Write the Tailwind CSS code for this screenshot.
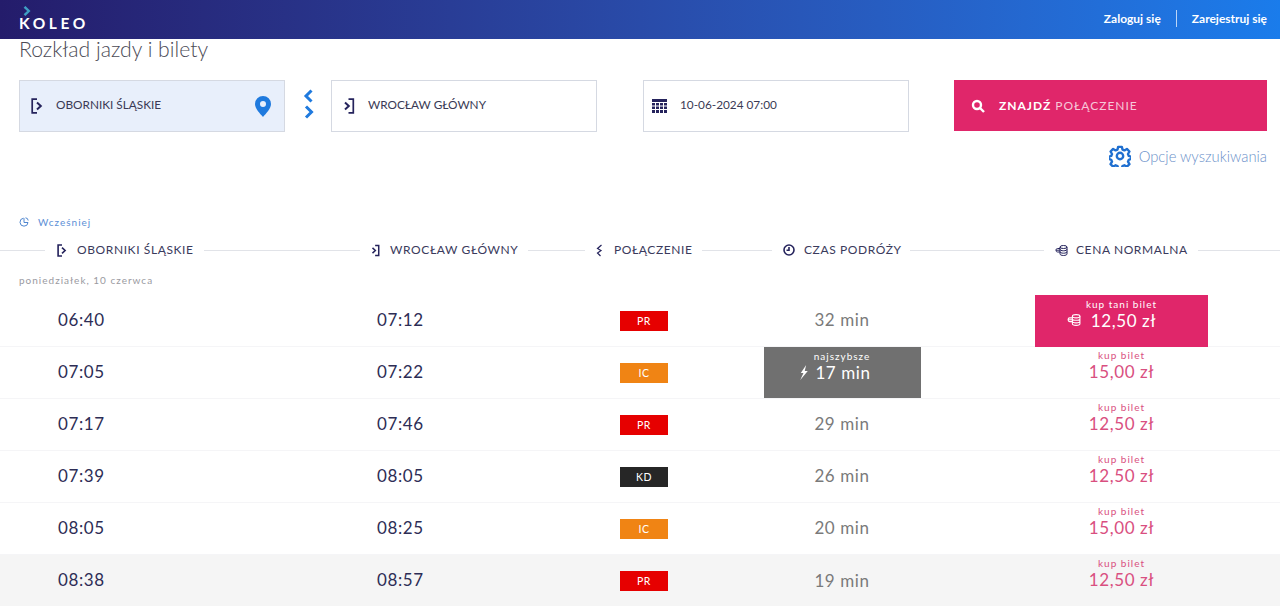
<!DOCTYPE html>
<html lang="pl">
<head>
    <meta charset="utf-8">
    <title>Koleo - Rozkład jazdy i bilety</title>
    <script src="https://cdn.jsdelivr.net/npm/@tailwindcss/browser@4"></script>
</head>
<body class="bg-white font-['Lato','Liberation_Sans',sans-serif] overflow-hidden h-[606px]">
    <!-- top bar -->
    <header class="h-[39px] bg-gradient-to-r from-[#241c6b] to-[#1a7ceb] flex items-center justify-between pl-[19px] pr-[13px]">
        <div class="relative h-[39px] w-[70px]">
            <svg class="absolute left-[4px] top-[6px]" width="8" height="10" viewBox="0 0 8 10"><path d="M1.500 .8 L5.800 5 L1.500 9.200" fill="none" stroke="#3f9fc4" stroke-width="2.400"/></svg>
            <span class="absolute left-0 top-[13px] text-white text-[15.500px] leading-[20px] font-bold tracking-[3.600px]">KOLEO</span>
        </div>
        <nav class="flex items-center text-white text-[12px] font-bold mb-[2px]">
            <a>Zaloguj się</a>
            <span class="w-px h-[17px] bg-white/70 mx-[15px]"></span>
            <a>Zarejestruj się</a>
        </nav>
    </header>

    <h1 class="pl-[19px] text-[21.200px] leading-[20px] font-light text-[#4a4a55]">Rozkład jazdy i bilety</h1>

    <!-- search form -->
    <form class="flex items-start mt-[21px] pl-[19px] pr-[13px]">
        <div class="w-[266px] h-[52px] bg-[#e8effb] border border-[#d5d9e2] flex items-center pl-[11px] pr-[13px]">
            <svg width="12" height="16" viewBox="0 0 12 16" fill="none" stroke="#25235c" stroke-width="1.700"><path d="M6 1.200H1.200V14.800H6"/><path d="M6 4.500L9.800 8L6 11.500" stroke-width="2"/></svg>
            <span class="ml-[13px] pb-[2px] text-[11.800px] text-[#3a3a55] flex-1">OBORNIKI ŚLĄSKIE</span>
            <svg width="16" height="21" viewBox="0 0 16 21"><path fill-rule="evenodd" fill="#1f7ade" d="M8 0a8 8 0 0 1 8 8c0 4.500-5 9.500-8 13C5 17.500 0 12.500 0 8a8 8 0 0 1 8-8Zm0 5a3 3 0 1 0 0 6a3 3 0 0 0 0-6Z"/></svg>
        </div>
        <div class="w-[46px] h-[52px] flex items-center justify-center">
            <svg class="-mt-[4px]" width="12" height="32" viewBox="0 0 12 32" fill="none" stroke="#1f7ade" stroke-width="3"><path d="M9.500 2.500L4 8L9.500 13.500"/><path d="M4 18.500L9.500 24L4 29.500"/></svg>
        </div>
        <div class="w-[266px] h-[52px] border border-[#d5d9e2] flex items-center pl-[11px]">
            <svg width="12" height="16" viewBox="0 0 12 16" fill="none" stroke="#25235c" stroke-width="1.700"><path d="M5.500 1.200H10.300V14.800H5.500"/><path d="M2 4.500L5.800 8L2 11.500" stroke-width="2"/></svg>
            <span class="ml-[13px] pb-[2px] text-[11.800px] text-[#3a3a55]">WROCŁAW GŁÓWNY</span>
        </div>
        <div class="ml-[46px] w-[266px] h-[52px] border border-[#d5d9e2] flex items-center pl-[8px]">
            <svg width="15" height="15" viewBox="0 0 15 15" fill="#25235c"><path d="M0 0h15v3H0z"/><path d="M0 4h3v2.500H0zM4 4h3v2.500H4zM8 4h3v2.500H8zM12 4h3v2.500h-3zM0 7.500h3V10H0zM4 7.500h3V10H4zM8 7.500h3V10H8zM12 7.500h3V10h-3zM0 11h3v3H0zM4 11h3v3H4zM8 11h3v3H8zM12 11h3v3h-3z"/></svg>
            <span class="ml-[13px] pb-[2px] text-[11.800px] text-[#3a3a55]">10-06-2024 07:00</span>
        </div>
        <div class="flex flex-col items-end ml-[45px]">
            <button type="button" class="w-[313px] h-[51px] bg-[#e0266a] flex items-center pl-[17px] text-white text-[12px] tracking-[1px]">
                <svg width="14" height="14" viewBox="0 0 14 14" fill="none" stroke="#fff" stroke-width="2.400"><circle cx="6" cy="6" r="4"/><path d="M9 9l4 4"/></svg>
                <span class="ml-[14px] font-bold">ZNAJDŹ</span><span class="ml-[4px] text-white/75">POŁĄCZENIE</span>
            </button>
            <a class="flex items-center mt-[14px] text-[14.800px] leading-[22px] font-light text-[#6a8fc9]">
                <svg class="mr-[8px]" width="22" height="22" viewBox="0 0 24 24" fill="none" stroke="#1f6fd0" stroke-width="2.600" stroke-linejoin="round"><circle cx="12" cy="12" r="3.500"/><path d="M10 2h4l.7 3 2.100.9 2.700-1.600 2.800 2.800-1.600 2.700.9 2.100 2.400.9v2.400l-2.400.9-.9 2.100 1.600 2.700-2.800 2.800-2.700-1.600-2.100.9-.7 2.600h-4l-.7-2.600-2.100-.9-2.700 1.600-2.800-2.800 1.600-2.700-.9-2.100-2.400-.9v-2.400l2.400-.9.9-2.100-1.600-2.700 2.800-2.800 2.700 1.600 2.100-.9z"/></svg>
                Opcje wyszukiwania
            </a>
        </div>
    </form>

    <a class="flex items-center mt-[48px] pl-[19px] text-[10px] leading-[14px] tracking-[1px] text-[#5c8fd6]">
        <svg class="mr-[9px]" width="10" height="10" viewBox="0 0 10 10" fill="none" stroke="#4f86cf" stroke-width="1"><path d="M4.500 1.200A4 4 0 1 0 9 5.500H5V1.200"/><path d="M6.500 .8A3 3 0 0 1 9.200 3.500"/></svg>
        Wcześniej
    </a>

    <!-- column headings -->
    <div class="flex items-center mt-[9px] h-[24px] text-[12px] tracking-[.6px] text-[#3a3a5c]">
        <span class="w-[45px] h-px bg-[#e1e3e8]"></span>
        <svg class="ml-[12px] mr-[10px]" width="10" height="13" viewBox="0 0 12 16" fill="none" stroke="#25235c" stroke-width="2"><path d="M6 1.200H1.200V14.800H6"/><path d="M6 4.500L9.800 8L6 11.500"/></svg>
        <span class="w-[116px] whitespace-nowrap">OBORNIKI ŚLĄSKIE</span>
        <span class="ml-[11px] w-[156px] h-px bg-[#e1e3e8]"></span>
        <svg class="ml-[11px] mr-[10px]" width="9" height="13" viewBox="0 0 12 16" fill="none" stroke="#25235c" stroke-width="2"><path d="M5.500 1.200H10.300V14.800H5.500"/><path d="M2 4.500L5.800 8L2 11.500"/></svg>
        <span class="w-[129px] whitespace-nowrap">WROCŁAW GŁÓWNY</span>
        <span class="ml-[9px] w-[57px] h-px bg-[#e1e3e8]"></span>
        <svg class="ml-[11px] mr-[11px]" width="7" height="13" viewBox="0 0 7 13" fill="none" stroke="#25235c" stroke-width="1.200"><path d="M5.500 1L1.500 4.500L5 6.500L1.500 9L4.500 12"/></svg>
        <span class="w-[79px] whitespace-nowrap">POŁĄCZENIE</span>
        <span class="ml-[9px] w-[70px] h-px bg-[#e1e3e8]"></span>
        <svg class="ml-[11px] mr-[9px]" width="12" height="12" viewBox="0 0 12 12" fill="none" stroke="#25235c" stroke-width="1.600"><circle cx="6" cy="6" r="5"/><path d="M6 3v3.300H3.500"/></svg>
        <span class="w-[98px] whitespace-nowrap">CZAS PODRÓŻY</span>
        <span class="ml-[8px] w-[134px] h-px bg-[#e1e3e8]"></span>
        <svg class="ml-[11px] mr-[8px]" width="13" height="11" viewBox="0 0 13 11" fill="none" stroke="#25235c" stroke-width="1"><ellipse cx="8.500" cy="2" rx="3.500" ry="1.500"/><path d="M5 2v7c0 .8 1.500 1.500 3.500 1.500S12 9.800 12 9V2M5 4.300c0 .8 1.500 1.500 3.500 1.500S12 5.100 12 4.300M5 6.700c0 .8 1.500 1.500 3.500 1.500S12 7.500 12 6.700"/><path d="M5 3.500H2.500C1.500 3.500 1 4.200 1 5.200S1.500 7 2.500 7H5M1 5.200h4"/></svg>
        <span class="w-[112px] whitespace-nowrap">CENA NORMALNA</span>
        <span class="ml-[10px] flex-1 h-px bg-[#e1e3e8]"></span>
    </div>

    <p class="pl-[19px] mt-[11px] h-[22px] text-[10px] leading-[14px] tracking-[1px] text-[#9a9a9f]">poniedziałek, 10 czerwca</p>

    <!-- timetable -->
    <div class="grid grid-cols-[377px_190px_154px_242px_317px] auto-rows-[52px] items-center text-[17px] tracking-[.6px] text-[#2d2d55]">
        <div class="h-[52px] flex items-center pl-[58px] pb-[2px] border-b border-[#f5f5f7]">06:40</div>
        <div class="h-[52px] flex items-center pb-[2px] border-b border-[#f5f5f7]">07:12</div>
        <div class="h-[52px] flex items-center justify-center border-b border-[#f5f5f7]"><span class="w-[48px] h-[20px] bg-[#e60000] text-white text-[10.500px] leading-[20px] text-center">PR</span></div>
        <div class="h-[52px] flex items-center justify-center pb-[1px] border-b border-[#f5f5f7] text-[#7a7a7a]">32 min</div>
        <div class="h-[52px] flex items-center justify-center border-b border-[#f5f5f7]">
            <div class="w-[173px] h-[52px] bg-[#e0266a] text-white flex flex-col items-center">
                <span class="text-[10px] leading-[12px] mt-[3px] tracking-[1px]">kup tani bilet</span>
                <span class="flex items-center text-[17px] leading-[21px] mr-[20px]">
                    <svg class="mr-[10px]" width="14" height="12" viewBox="0 0 13 11" fill="none" stroke="#fff" stroke-width="1"><ellipse cx="8.500" cy="2" rx="3.500" ry="1.500"/><path d="M5 2v7c0 .8 1.500 1.500 3.500 1.500S12 9.800 12 9V2M5 4.300c0 .8 1.500 1.500 3.500 1.500S12 5.100 12 4.300M5 6.700c0 .8 1.500 1.500 3.500 1.500S12 7.500 12 6.700"/><path d="M5 3.500H2.500C1.500 3.500 1 4.200 1 5.200S1.500 7 2.500 7H5M1 5.200h4"/></svg>
                    12,50 zł
                </span>
            </div>
        </div>

        <div class="h-[52px] flex items-center pl-[58px] pb-[2px] border-b border-[#f5f5f7]">07:05</div>
        <div class="h-[52px] flex items-center pb-[2px] border-b border-[#f5f5f7]">07:22</div>
        <div class="h-[52px] flex items-center justify-center border-b border-[#f5f5f7]"><span class="w-[48px] h-[20px] bg-[#f08414] text-white text-[10.500px] leading-[20px] text-center">IC</span></div>
        <div class="h-[52px] flex items-center justify-center border-b border-[#f5f5f7]">
            <div class="w-[157px] h-[51px] bg-[#707070] text-white flex flex-col items-center">
                <span class="text-[10px] leading-[12px] mt-[3px] tracking-[1px]">najszybsze</span>
                <span class="flex items-center leading-[21px] mr-[14px]">
                    <svg class="mr-[6px]" width="10" height="15" viewBox="0 0 9 14" fill="#fff"><path d="M6.500 0L1.500 7.500H4L1 14L8 5.500H5.200z"/></svg>
                    17 min
                </span>
            </div>
        </div>
        <div class="h-[52px] flex flex-col items-center border-b border-[#f5f5f7] text-[#d94f80]">
            <span class="text-[10px] leading-[12px] mt-[2px] tracking-[1px]">kup bilet</span>
            <span class="leading-[22px]">15,00 zł</span>
        </div>

        <div class="h-[52px] flex items-center pl-[58px] pb-[2px] border-b border-[#f5f5f7]">07:17</div>
        <div class="h-[52px] flex items-center pb-[2px] border-b border-[#f5f5f7]">07:46</div>
        <div class="h-[52px] flex items-center justify-center border-b border-[#f5f5f7]"><span class="w-[48px] h-[20px] bg-[#e60000] text-white text-[10.500px] leading-[20px] text-center">PR</span></div>
        <div class="h-[52px] flex items-center justify-center pb-[1px] border-b border-[#f5f5f7] text-[#7a7a7a]">29 min</div>
        <div class="h-[52px] flex flex-col items-center border-b border-[#f5f5f7] text-[#d94f80]">
            <span class="text-[10px] leading-[12px] mt-[2px] tracking-[1px]">kup bilet</span>
            <span class="leading-[22px]">12,50 zł</span>
        </div>

        <div class="h-[52px] flex items-center pl-[58px] pb-[2px] border-b border-[#f5f5f7]">07:39</div>
        <div class="h-[52px] flex items-center pb-[2px] border-b border-[#f5f5f7]">08:05</div>
        <div class="h-[52px] flex items-center justify-center border-b border-[#f5f5f7]"><span class="w-[48px] h-[20px] bg-[#262626] text-white text-[10.500px] leading-[20px] text-center">KD</span></div>
        <div class="h-[52px] flex items-center justify-center pb-[1px] border-b border-[#f5f5f7] text-[#7a7a7a]">26 min</div>
        <div class="h-[52px] flex flex-col items-center border-b border-[#f5f5f7] text-[#d94f80]">
            <span class="text-[10px] leading-[12px] mt-[2px] tracking-[1px]">kup bilet</span>
            <span class="leading-[22px]">12,50 zł</span>
        </div>

        <div class="h-[52px] flex items-center pl-[58px] pb-[2px] border-b border-[#f5f5f7]">08:05</div>
        <div class="h-[52px] flex items-center pb-[2px] border-b border-[#f5f5f7]">08:25</div>
        <div class="h-[52px] flex items-center justify-center border-b border-[#f5f5f7]"><span class="w-[48px] h-[20px] bg-[#f08414] text-white text-[10.500px] leading-[20px] text-center">IC</span></div>
        <div class="h-[52px] flex items-center justify-center pb-[1px] border-b border-[#f5f5f7] text-[#7a7a7a]">20 min</div>
        <div class="h-[52px] flex flex-col items-center border-b border-[#f5f5f7] text-[#d94f80]">
            <span class="text-[10px] leading-[12px] mt-[2px] tracking-[1px]">kup bilet</span>
            <span class="leading-[22px]">15,00 zł</span>
        </div>

        <div class="h-[52px] flex items-center pl-[58px] pb-[2px] bg-[#f5f5f5]">08:38</div>
        <div class="h-[52px] flex items-center pb-[2px] bg-[#f5f5f5]">08:57</div>
        <div class="h-[52px] flex items-center justify-center bg-[#f5f5f5]"><span class="w-[48px] h-[20px] bg-[#e60000] text-white text-[10.500px] leading-[20px] text-center">PR</span></div>
        <div class="h-[52px] flex items-center justify-center pb-[1px] bg-[#f5f5f5] text-[#7a7a7a]">19 min</div>
        <div class="h-[52px] flex flex-col items-center bg-[#f5f5f5] text-[#d94f80]">
            <span class="text-[10px] leading-[12px] mt-[2px] tracking-[1px]">kup bilet</span>
            <span class="leading-[22px]">12,50 zł</span>
        </div>
    </div>
</body>
</html>
